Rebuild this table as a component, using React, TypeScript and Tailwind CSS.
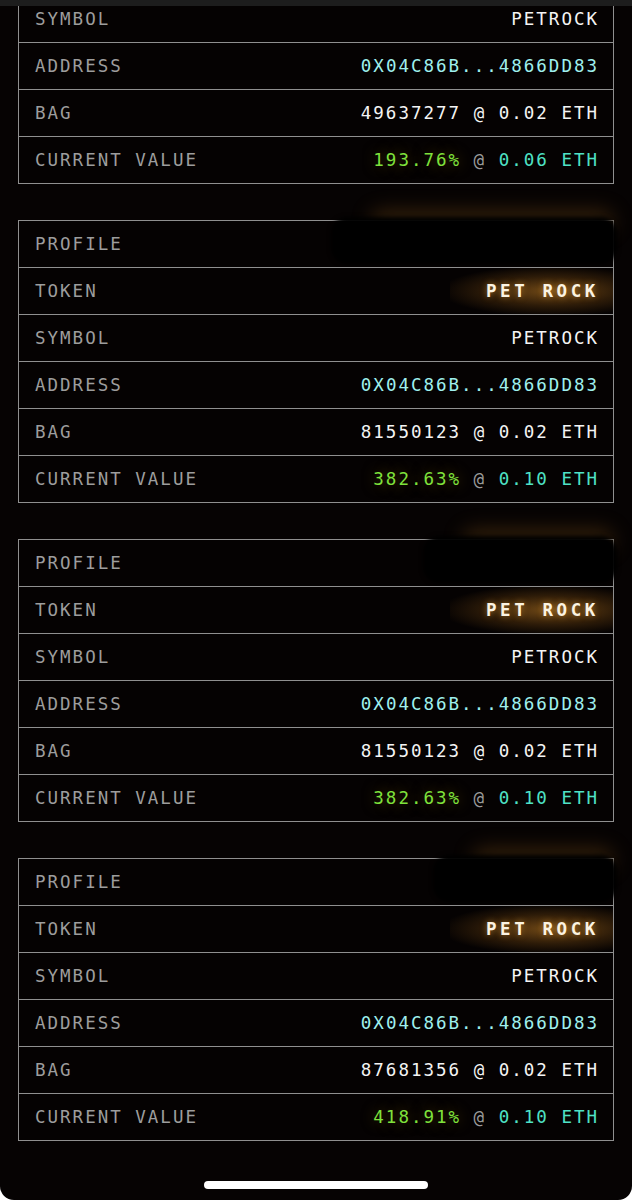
import React from 'react';

type Card = {
  blurLeft?: number;
  bag: string;
  pct: string;
  eth: string;
};

const cards: Card[] = [
  { bag: '49637277', pct: '193.76%', eth: '0.06' },
  { blurLeft: 312, bag: '81550123', pct: '382.63%', eth: '0.10' },
  { blurLeft: 404, bag: '81550123', pct: '382.63%', eth: '0.10' },
  { blurLeft: 414, bag: '87681356', pct: '418.91%', eth: '0.10' },
];

function Row({ label, children, first }: { label: string; children?: React.ReactNode; first?: boolean }) {
  return (
    <div
      className={`relative flex items-center justify-between pl-[16px] pr-[14px] ${
        first ? 'h-[46px]' : 'h-[47px] border-t border-[#8f8f8f]'
      }`}
    >
      <span className="text-[#9d9d9d]">{label}</span>
      {children}
    </div>
  );
}

function HoldingCard({ card, index }: { card: Card; index: number }) {
  return (
    <div className={`border border-[#8f8f8f] bg-[#050202] ${index === 0 ? '-mt-[99px]' : ''}`}>
      <Row label="PROFILE" first>
        {card.blurLeft !== undefined && (
          /* redacted profile name in the source screenshot */
          <>
            <div
              className="absolute -top-[10px] right-0 h-[20px] rounded-full bg-[rgba(150,95,25,0.35)] blur-[10px]"
              style={{ left: card.blurLeft + 40 }}
            />
            <div
              className="absolute -top-[4px] -right-[4px] bottom-[3px] rounded-[16px] bg-black blur-[2px]"
              style={{ left: card.blurLeft }}
            />
          </>
        )}
      </Row>
      <Row label="TOKEN">
        <span className="-mr-[14px] flex h-[46px] items-center bg-[radial-gradient(ellipse_at_62%_50%,rgba(185,120,35,0.6)_0%,rgba(120,75,20,0.35)_45%,transparent_78%)] pl-[36px] pr-[14px] font-bold tracking-[3.6px] text-[#fbf3e2] [text-shadow:0_0_6px_rgba(240,170,60,0.55)]">
          PET ROCK
        </span>
      </Row>
      <Row label="SYMBOL">
        <span className="text-[#f4f4f4]">PETROCK</span>
      </Row>
      <Row label="ADDRESS">
        <span className="text-[#9ff0ee]">0X04C86B...4866DD83</span>
      </Row>
      <Row label="BAG">
        <span className="text-[#f4f4f4]">{card.bag} @ 0.02 ETH</span>
      </Row>
      <Row label="CURRENT VALUE">
        <span>
          <span className="text-[#7fe23c] [text-shadow:0_0_14px_rgba(140,110,20,0.6)]">{card.pct}</span>
          <span className="text-[#9a9a9a]"> @ </span>
          <span className="text-[#4fe2c6]">{card.eth} ETH</span>
        </span>
      </Row>
    </div>
  );
}

export default function App() {
  return (
    <div className="bg-white">
      <div
        className="relative h-[1200px] overflow-hidden rounded-b-[14px] bg-[#060303] text-[17.5px] tracking-[2px]"
        style={{ fontFamily: '"DejaVu Sans Mono", "Liberation Mono", monospace' }}
      >
        <div className="flex flex-col gap-[36px] px-[18px]">
          {cards.map((c, i) => (
            <HoldingCard key={i} card={c} index={i} />
          ))}
        </div>

        {/* status bar remnant */}
        <div className="absolute inset-x-0 top-0 h-[6px] bg-[#1d1d1d]" />

        {/* home indicator */}
        <div className="absolute bottom-[11px] left-[204px] h-[8px] w-[224px] rounded-full bg-white" />
      </div>
    </div>
  );
}
